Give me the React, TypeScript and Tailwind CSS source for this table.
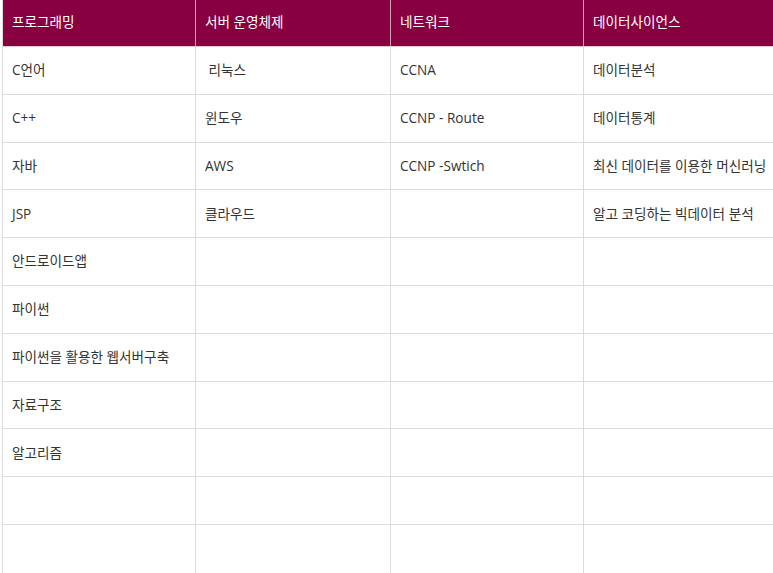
import React from 'react';

const headers = ['프로그래밍', '서버 운영체제', '네트워크', '데이터사이언스'];

const rows: string[][] = [
  ['C언어', ' 리눅스', 'CCNA', '데이터분석'],
  ['C++', '윈도우', 'CCNP - Route', '데이터통계'],
  ['자바', 'AWS', 'CCNP -Swtich', '최신 데이터를 이용한 머신러닝'],
  ['JSP', '클라우드', '', '알고 코딩하는 빅데이터 분석'],
  ['안드로이드앱', '', '', ''],
  ['파이썬', '', '', ''],
  ['파이썬을 활용한 웹서버구축', '', '', ''],
  ['자료구조', '', '', ''],
  ['알고리즘', '', '', ''],
  ['', '', '', ''],
  ['', '', '', ''],
];

export default function App() {
  return (
    <div className="w-[773px] h-[573px] overflow-hidden bg-white">
      <div
        className="ml-[2px] w-[780px] grid grid-cols-[193px_195px_193px_194px] border-l border-[#dcdcdc] text-[13.6px]"
        style={{ fontFamily: '"Open Sans", "Noto Sans CJK KR", sans-serif' }}
      >
        {headers.map((h) => (
          <div
            key={h}
            className="h-[47px] flex items-center px-[9px] pb-[2px] bg-[#88003f] text-white border-r border-b border-r-[#c9a3b5] border-b-[#e8c8d6]"
          >
            {h}
          </div>
        ))}
        {rows.map((row, i) =>
          row.map((cell, j) => (
            <div
              key={`${i}-${j}`}
              className={
                i === rows.length - 1
                  ? 'h-[49px] flex items-center px-[9px] text-[#333] border-r border-[#dcdcdc] whitespace-pre'
                  : 'h-[47.8px] flex items-center px-[9px] text-[#333] border-r border-b border-[#dcdcdc] whitespace-pre'
              }
            >
              {cell}
            </div>
          ))
        )}
      </div>
    </div>
  );
}
